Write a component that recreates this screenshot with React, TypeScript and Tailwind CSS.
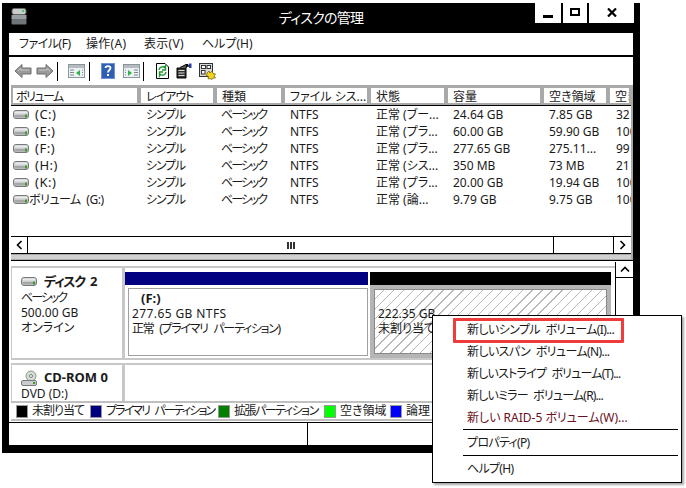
import React from "react";

const font = "font-['Noto_Sans','Noto_Sans_CJK_JP',sans-serif] [font-feature-settings:'palt']";

function Hdd({ className = "" }: { className?: string }) {
  return (
    <svg width="16" height="9" viewBox="0 0 16 9" className={className}>
      <rect x="0.5" y="0.5" width="15" height="8" rx="2.5" fill="#c9cbcd" stroke="#77797b" />
      <rect x="1.5" y="1.5" width="13" height="2" rx="1" fill="#e8e9ea" />
      <rect x="1.5" y="5" width="13" height="2.5" fill="#a5a7a9" />
      <rect x="12" y="4.5" width="2" height="3" fill="#3f9a2a" />
    </svg>
  );
}

function Arrow({ flip = false }: { flip?: boolean }) {
  return (
    <svg width="18" height="16" viewBox="0 0 18 16" className={flip ? "scale-x-[-1]" : ""}>
      <path d="M1 8 L8 1.5 V5 H17 V11 H8 V14.5 Z" fill="#9a9a9a" stroke="#6f6f6f" />
      <path d="M4 8 L7 5.5 V7 H15" fill="none" stroke="#c8c8c8" />
    </svg>
  );
}

function PaneIcon({ right = false }: { right?: boolean }) {
  return (
    <svg width="17" height="14" viewBox="0 0 17 14">
      <rect x="0.5" y="0.5" width="16" height="13" fill="#eef1f3" stroke="#8b969c" />
      <rect x="1" y="1" width="15" height="3" fill="#b4bcc2" />
      {right ? (
        <>
          <path d="M5 6 L9 9 L5 12 Z" fill="#2fb34a" />
          <path d="M11 6h4M11 8.5h4M11 11h4M2 6h1M2 8.5h1M2 11h1" stroke="#7b868c" />
        </>
      ) : (
        <>
          <path d="M12 6 L8 9 L12 12 Z" fill="#2fb34a" />
          <path d="M2 6h4M2 8.5h4M2 11h4M14 6h1M14 8.5h1M14 11h1" stroke="#7b868c" />
        </>
      )}
    </svg>
  );
}

function Toolbar() {
  const sep = <div className="w-px h-[19px] bg-black" />;
  return (
    <div className="h-[28px] flex items-center pl-[5px] border-t-2 border-black box-content">
      <div className="flex items-center gap-[4px] w-[46px]">
        <Arrow />
        <Arrow flip />
      </div>
      <div className="ml-[-3px]">{sep}</div>
      <div className="ml-[10px]"><PaneIcon /></div>
      <div className="ml-[4px]">{sep}</div>
      <svg width="14" height="16" viewBox="0 0 14 16" className="ml-[11px]">
        <rect width="14" height="16" fill="#2f5fb5" />
        <rect x="0.5" y="0.5" width="13" height="15" fill="none" stroke="#6f93d6" />
        <path d="M4.5 5 C4.5 2.5 9.5 2.5 9.5 5 C9.5 7 7 7 7 9.5" fill="none" stroke="#fff" strokeWidth="1.8" />
        <rect x="6" y="11" width="2" height="2" fill="#fff" />
      </svg>
      <div className="ml-[8px]"><PaneIcon right /></div>
      <div className="ml-[3px]">{sep}</div>
      <svg width="15" height="16" viewBox="0 0 15 16" className="ml-[11px]">
        <path d="M1.5 0.5 H10 L13.5 4 V15.5 H1.5 Z" fill="#fff" stroke="#000" />
        <path d="M4 7 A3.5 3.5 0 0 1 9.5 4.5 L10.5 3 V7 H7" fill="none" stroke="#1d9a2d" strokeWidth="1.4" />
        <path d="M11 9 A3.5 3.5 0 0 1 5.5 11.5 L4.5 13 V9 H8" fill="none" stroke="#1d9a2d" strokeWidth="1.4" />
      </svg>
      <svg width="16" height="16" viewBox="0 0 16 16" className="ml-[6px]">
        <path d="M1 5 H10 V15 H1 Z" fill="#333" stroke="#000" />
        <path d="M2.5 7.5h6M2.5 10h6M2.5 12.5h6" stroke="#ddd" />
        <path d="M4 4.5 L10 1.5 H12 L10 5" fill="#555" stroke="#000" />
        <rect x="13" y="0.5" width="2.5" height="4.5" fill="#2a3fa8" />
        <path d="M10 3 H13" stroke="#000" strokeWidth="1.5" />
      </svg>
      <svg width="17" height="17" viewBox="0 0 17 17" className="ml-[7px]">
        <rect x="0.5" y="0.5" width="13" height="13" fill="#d8d8d8" stroke="#333" />
        <rect x="2.5" y="2.5" width="4" height="3" fill="#fff" stroke="#333" />
        <rect x="8" y="2.5" width="3.5" height="3" fill="#fff" stroke="#333" />
        <rect x="2.5" y="7.5" width="3.5" height="3.5" fill="#fff" stroke="#333" />
        <path d="M8 10 L10 8 L11 10 L13 8 L14 10.5 L16.5 11 L15 13 L16.5 15 L14 15 L13 16.5 L11 15.5 L9 16 L9.5 13.5 L7.5 12.5 Z" fill="#f2d21c" stroke="#6a5a00" strokeWidth="0.7" />
      </svg>
    </div>
  );
}

const cols = [
  { label: "ボリューム", c: "w-[128px] pl-[3px] tracking-[-1.5px]" },
  { label: "レイアウト", c: "w-[76px] pl-[5px] tracking-[-1px]" },
  { label: "種類", c: "w-[68px] pl-[5px]" },
  { label: "ファイル シス...", c: "w-[86px] pl-[5px]" },
  { label: "状態", c: "w-[77px] pl-[5px]" },
  { label: "容量", c: "w-[96px] pl-[5px]" },
  { label: "空き領域", c: "w-[66px] pl-[5px]" },
  { label: "空き", c: "w-[23px] pl-[5px]" },
];

const rows = [
  ["(C:)", "シンプル", "ベーシック", "NTFS", "正常 (ブー...", "24.64 GB", "7.85 GB", "32"],
  ["(E:)", "シンプル", "ベーシック", "NTFS", "正常 (プラ...", "60.00 GB", "59.90 GB", "100"],
  ["(F:)", "シンプル", "ベーシック", "NTFS", "正常 (プラ...", "277.65 GB", "275.11...", "99"],
  ["(H:)", "シンプル", "ベーシック", "NTFS", "正常 (シス...", "350 MB", "73 MB", "21"],
  ["(K:)", "シンプル", "ベーシック", "NTFS", "正常 (プラ...", "20.00 GB", "19.94 GB", "100"],
  ["ボリューム (G:)", "シンプル", "ベーシック", "NTFS", "正常 (論...", "9.79 GB", "9.75 GB", "100"],
];

function VolumeList() {
  return (
    <div className="h-[150px] overflow-hidden flex flex-col bg-white">
      <div className="flex h-[20px] border-b border-black shrink-0">
        {cols.map((c) => (
          <div
            key={c.label}
            className={`${c.c} shrink-0 border-[2px] border-[#a9a9a9] leading-[17px] whitespace-nowrap overflow-hidden`}
          >
            {c.label}
          </div>
        ))}
      </div>
      <div className="flex-1">
        {rows.map((r) => (
          <div key={r[0]} className="flex h-[17px] leading-[17px] whitespace-nowrap">
            <div className="w-[129px] shrink-0 flex items-center pl-[2px]">
              <Hdd className="shrink-0" />
              {r[0].startsWith("(") ? (
                <span className="ml-[6px] text-[13px] tracking-[0.5px]">{r[0]}</span>
              ) : (
                <span className="ml-0 tracking-[-0.5px] [word-spacing:3px]">{r[0]}</span>
              )}
            </div>
            <div className="w-[75px] shrink-0 pl-[6px] tracking-[-1.2px]">{r[1]}</div>
            <div className="w-[68px] shrink-0 pl-[6px] tracking-[-2px]">{r[2]}</div>
            <div className="w-[86px] shrink-0 pl-[7px]">{r[3]}</div>
            <div className="w-[77px] shrink-0 pl-[7px]">{r[4]}</div>
            <div className="w-[96px] shrink-0 pl-[7px]">{r[5]}</div>
            <div className="w-[66px] shrink-0 pl-[7px]">{r[6]}</div>
            <div className="w-[23px] shrink-0 pl-[8px] overflow-hidden">{r[7]}</div>
          </div>
        ))}
      </div>
    </div>
  );
}

function HScroll() {
  return (
    <div className="h-[18px] shrink-0 flex border-y border-black bg-white box-border">
      <div className="w-[17px] flex items-center justify-center border-r border-black">
        <svg width="7" height="10" viewBox="0 0 7 10"><path d="M5.5 1 L1.5 5 L5.5 9" fill="none" stroke="#000" strokeWidth="1.6" /></svg>
      </div>
      <div className="w-[526px] flex items-center justify-center border-r border-black">
        <svg width="8" height="7" viewBox="0 0 8 7"><path d="M1 0v7M4 0v7M7 0v7" stroke="#000" strokeWidth="1.6" /></svg>
      </div>
      <div className="w-[60px] border-r border-black" />
      <div className="flex-1 flex items-center justify-center">
        <svg width="7" height="10" viewBox="0 0 7 10"><path d="M1.5 1 L5.5 5 L1.5 9" fill="none" stroke="#000" strokeWidth="1.6" /></svg>
      </div>
    </div>
  );
}

function DiskPane() {
  const swatch = "w-[12px] h-[13px] border border-[#999] shrink-0";
  return (
    <div className="h-[162px] overflow-hidden flex bg-white border-t border-black relative">
      <div className="w-[604px] shrink-0 pt-[5px]">
        <div className="flex h-[94px] border-y-2 border-[#c8c8c8]">
          <div className="w-[111px] shrink-0 border-l border-[#c8c8c8] pl-[9px] pt-[5px] leading-[15px]">
            <div className="flex items-center gap-[7px] h-[17px] font-bold text-[13px]">
              <Hdd className="shrink-0" />
              <span className="tracking-[-1.2px] [word-spacing:3px]">ディスク 2</span>
            </div>
            <div className="tracking-[-2px]">ベーシック</div>
            <div>500.00 GB</div>
            <div>オンライン</div>
          </div>
          <div className="flex-1 border-l-[3px] border-[#c8c8c8] pt-[4px] flex">
            <div className="w-[243px] shrink-0">
              <div className="h-[13px] bg-[#000080]" />
              <div className="border-[1px] border-[#a0a0a0] mt-[3px] ml-[3px] h-[68px] pl-[3px] leading-[15px] pt-[2px]">
                <div className="pl-[9px] font-bold text-[13px] h-[15px]">(F:)</div>
                <div className="tracking-[0.4px]">277.65 GB NTFS</div>
                <div className="tracking-[-1.3px] [word-spacing:4px]">正常 (プライマリ パーティション)</div>
              </div>
            </div>
            <div className="w-[2px] shrink-0" />
            <div className="w-[241px] shrink-0">
              <div className="h-[13px] bg-black" />
              <div className="border-[4px] border-[#b5b5b5] h-[73px]">
                <div className="h-full border border-[#8a8a8a] pl-[3px] pt-[16px] leading-[15px] bg-[repeating-linear-gradient(135deg,#ffffff_0,#ffffff_6px,#b8b8b8_6px,#b8b8b8_7px)]">
                  <div>222.35 GB</div>
                  <div>未割り当て</div>
                </div>
              </div>
            </div>
          </div>
        </div>
        <div className="flex h-[40px] mt-[3px] border-t-2 border-[#c8c8c8]">
          <div className="w-[111px] shrink-0 border-l border-[#c8c8c8] pl-[9px] pt-[4px] leading-[15px]">
            <div className="flex items-center gap-[7px] h-[17px] font-bold text-[13px]">
              <svg width="16" height="16" viewBox="0 0 16 16" className="shrink-0">
                <circle cx="10" cy="6" r="5" fill="#d8dcd8" stroke="#8b9a8b" />
                <circle cx="10" cy="6" r="1.5" fill="#fff" stroke="#6a8a6a" />
                <rect x="0.5" y="10.5" width="15" height="5" rx="1.5" fill="#c9cbcd" stroke="#77797b" />
                <rect x="12" y="12" width="2" height="2" fill="#3f9a2a" />
              </svg>
              <span>CD-ROM 0</span>
            </div>
            <div>DVD (D:)</div>
          </div>
          <div className="flex-1 border-l-[3px] border-[#c8c8c8]" />
        </div>
      </div>
      <div className="flex-1 mt-[1px] border-l border-black">
        <div className="h-[16px] border-b border-black flex items-center justify-center">
          <svg width="10" height="7" viewBox="0 0 10 7"><path d="M1 5.5 L5 1.5 L9 5.5" fill="none" stroke="#000" strokeWidth="1.6" /></svg>
        </div>
      </div>
      <div className="absolute left-0 right-0 bottom-[1px] h-[20px] bg-white border-y-2 border-[#c0c0c0] flex items-center pl-[5px] whitespace-nowrap">
        <span className={`${swatch} bg-black`} />
        <span className="ml-[4px] w-[58px] tracking-[-1px]">未割り当て</span>
        <span className={`${swatch} bg-[#000080]`} />
        <span className="ml-[4px] w-[112px] tracking-[-1.9px] [word-spacing:4px]">プライマリ パーティション</span>
        <span className={`${swatch} bg-[#008000]`} />
        <span className="ml-[4px] w-[90px] tracking-[-1.5px]">拡張パーティション</span>
        <span className={`${swatch} bg-[#00ff00]`} />
        <span className="ml-[4px] w-[50px]">空き領域</span>
        <span className={`${swatch} bg-[#0000ff]`} />
        <span className="ml-[4px]">論理</span>
      </div>
    </div>
  );
}

function ContextMenu() {
  const item = "h-[22px] leading-[22px] pl-[34px] [word-spacing:3px]";
  return (
    <div className="absolute left-[432px] top-[315px] w-[250px] h-[168px] bg-white border border-black shadow-[2px_2px_2px_rgba(0,0,0,0.35)] text-[12px] pt-[3px]">
      <div className="absolute left-[20px] top-[2px] w-[171px] h-[25px] border-[3px] border-[#ee3b3b] rounded-[1px]" />
      <div className={`${item} tracking-[-0.6px]`}>新しいシンプル ボリューム(I)...</div>
      <div className={`${item} tracking-[-0.6px]`}>新しいスパン ボリューム(N)...</div>
      <div className={`${item} tracking-[-0.8px]`}>新しいストライプ ボリューム(T)...</div>
      <div className={`${item} tracking-[-0.8px]`}>新しいミラー ボリューム(R)...</div>
      <div className="h-[22px] leading-[22px] pl-[34px] text-[#6b1020]">新しい RAID-5 ボリューム(W)...</div>
      <div className="h-px bg-black ml-[30px] mr-[3px]" />
      <div className={`${item} mt-[2px] tracking-[-0.7px]`}>プロパティ(P)</div>
      <div className="h-px bg-black ml-[30px] mr-[3px] mt-[1px]" />
      <div className={`${item} mt-[2px] tracking-[-0.7px]`}>ヘルプ(H)</div>
    </div>
  );
}

export default function App() {
  return (
    <div className={`relative w-[686px] h-[488px] bg-white overflow-hidden text-[12px] text-[#1a1a1a] ${font}`}>
      <div className="absolute left-[2px] top-[3px] w-[638px] h-[450px] bg-black flex flex-col">
        <div className="h-[30px] shrink-0 flex relative text-white">
          <svg width="16" height="17" viewBox="0 0 16 17" className="absolute left-[9px] top-[5px]">
            <rect x="1" y="0.5" width="14" height="6" rx="2" fill="#c9cbcd" stroke="#666" />
            <rect x="11" y="2" width="2" height="2" fill="#39d353" />
            <rect x="0.5" y="7" width="15" height="4" fill="#9a9ea2" />
            <rect x="0.5" y="11" width="15" height="5.5" rx="1" fill="#6f7478" />
          </svg>
          <div className="flex-1 text-center text-[14px] leading-[30px] tracking-[-0.7px]">ディスクの管理</div>
          <div className="absolute right-[6px] top-0 flex gap-[2px] h-[20px]">
            <div className="w-[26px] bg-white flex items-center justify-center">
              <div className="w-[10px] h-[3px] bg-black mt-[7px]" />
            </div>
            <div className="w-[24px] bg-white flex items-center justify-center">
              <div className="w-[10px] h-[8px] border-2 border-black mb-[2px]" />
            </div>
            <div className="w-[45px] bg-white flex items-center justify-center">
              <svg width="10" height="9" viewBox="0 0 10 9" className="mb-[2px]"><path d="M1 0.5 L9 8.5 M9 0.5 L1 8.5" stroke="#000" strokeWidth="2.2" /></svg>
            </div>
          </div>
        </div>
        <div className="mx-[7px] flex-1 bg-white flex flex-col min-h-0">
          <div className="h-[22px] shrink-0 flex items-center pl-[10px] leading-[22px] whitespace-nowrap">
            <span className="w-[67px] tracking-[-0.5px]">ファイル(F)</span>
            <span className="w-[58px] tracking-[0.3px]">操作(A)</span>
            <span className="w-[58px] tracking-[0.3px]">表示(V)</span>
            <span>ヘルプ(H)</span>
          </div>
          <Toolbar />
          <div className="flex-1 flex flex-col min-h-0 pl-[2px]">
            <div className="border-r-[2px] border-[#a9a9a9] border-t border-t-[#a9a9a9]">
              <VolumeList />
              <HScroll />
              <div className="h-[6px] bg-[#d0d0d0] border-y border-[#a9a9a9]" />
            </div>
            <DiskPane />
          </div>
          <div className="h-[23px] shrink-0 flex border-t border-black">
            <div className="w-[299px] border-r border-black" />
            <div className="w-[147px] border-r border-black" />
          </div>
        </div>
        <div className="h-[8px] shrink-0" />
      </div>
      <ContextMenu />
    </div>
  );
}
